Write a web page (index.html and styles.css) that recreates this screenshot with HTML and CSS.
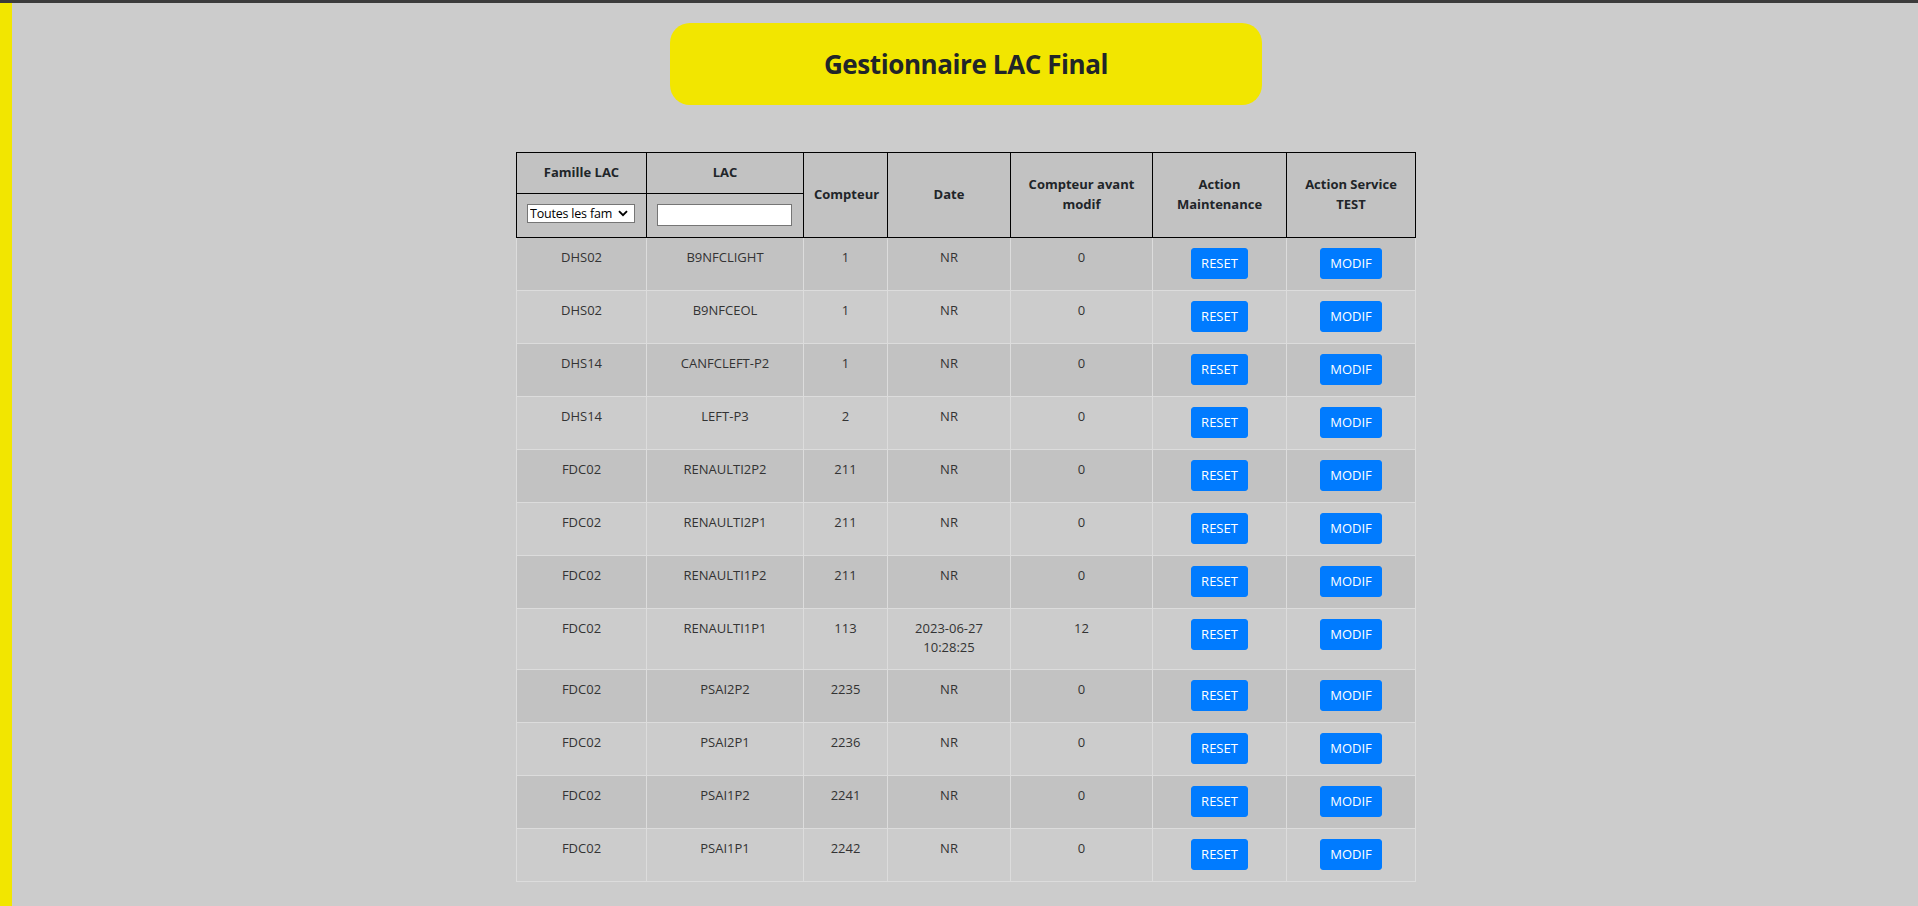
FILE: index.html
```html
<!DOCTYPE html>
<html lang="fr">
<head>
<meta charset="utf-8">
<title>Gestionnaire LAC Final</title>
<link rel="stylesheet" href="styles.css">
</head>
<body>
<div class="page">
  <header class="title-box">
    <h1 class="title">Gestionnaire LAC Final</h1>
  </header>
  <table class="lac-table">
    <colgroup>
      <col class="c-fam"><col class="c-lac"><col class="c-cpt"><col class="c-date"><col class="c-avant"><col class="c-maint"><col class="c-serv">
    </colgroup>
    <thead>
      <tr>
        <th>Famille LAC</th>
        <th>LAC</th>
        <th rowspan="2">Compteur</th>
        <th rowspan="2">Date</th>
        <th rowspan="2">Compteur avant modif</th>
        <th rowspan="2">Action Maintenance</th>
        <th rowspan="2">Action Service TEST</th>
      </tr>
      <tr class="filters">
        <th>
          <span class="select-wrap">
            <select class="filter-select">
              <option>Toutes les familles</option>
              <option>DHS02</option>
              <option>DHS14</option>
              <option>FDC02</option>
            </select>
            <svg class="select-arrow" viewBox="0 0 10 7" width="10" height="7" aria-hidden="true"><path d="M1 1.2 L5 5.2 L9 1.2" fill="none" stroke="#000" stroke-width="1.9"/></svg>
          </span>
        </th>
        <th><input class="filter-input" type="text"></th>
      </tr>
    </thead>
    <tbody>
      <tr><td>DHS02</td><td>B9NFCLIGHT</td><td>1</td><td>NR</td><td>0</td><td><button class="btn">RESET</button></td><td><button class="btn">MODIF</button></td></tr>
      <tr><td>DHS02</td><td>B9NFCEOL</td><td>1</td><td>NR</td><td>0</td><td><button class="btn">RESET</button></td><td><button class="btn">MODIF</button></td></tr>
      <tr><td>DHS14</td><td>CANFCLEFT-P2</td><td>1</td><td>NR</td><td>0</td><td><button class="btn">RESET</button></td><td><button class="btn">MODIF</button></td></tr>
      <tr><td>DHS14</td><td>LEFT-P3</td><td>2</td><td>NR</td><td>0</td><td><button class="btn">RESET</button></td><td><button class="btn">MODIF</button></td></tr>
      <tr><td>FDC02</td><td>RENAULTI2P2</td><td>211</td><td>NR</td><td>0</td><td><button class="btn">RESET</button></td><td><button class="btn">MODIF</button></td></tr>
      <tr><td>FDC02</td><td>RENAULTI2P1</td><td>211</td><td>NR</td><td>0</td><td><button class="btn">RESET</button></td><td><button class="btn">MODIF</button></td></tr>
      <tr><td>FDC02</td><td>RENAULTI1P2</td><td>211</td><td>NR</td><td>0</td><td><button class="btn">RESET</button></td><td><button class="btn">MODIF</button></td></tr>
      <tr><td>FDC02</td><td>RENAULTI1P1</td><td>113</td><td>2023-06-27 10:28:25</td><td>12</td><td><button class="btn">RESET</button></td><td><button class="btn">MODIF</button></td></tr>
      <tr><td>FDC02</td><td>PSAI2P2</td><td>2235</td><td>NR</td><td>0</td><td><button class="btn">RESET</button></td><td><button class="btn">MODIF</button></td></tr>
      <tr><td>FDC02</td><td>PSAI2P1</td><td>2236</td><td>NR</td><td>0</td><td><button class="btn">RESET</button></td><td><button class="btn">MODIF</button></td></tr>
      <tr><td>FDC02</td><td>PSAI1P2</td><td>2241</td><td>NR</td><td>0</td><td><button class="btn">RESET</button></td><td><button class="btn">MODIF</button></td></tr>
      <tr><td>FDC02</td><td>PSAI1P1</td><td>2242</td><td>NR</td><td>0</td><td><button class="btn">RESET</button></td><td><button class="btn">MODIF</button></td></tr>
    </tbody>
  </table>
</div>
</body>
</html>
```
FILE: styles.css
```css
html, body {
  margin: 0;
  padding: 0;
}

body {
  background: #cccccc;
  border-top: 3px solid #3b3b3b;
  font-family: "Open Sans", "Noto Sans", sans-serif;
  color: #212529;
}

.page {
  box-sizing: border-box;
  min-height: calc(100vh - 3px);
  border-left: 12px solid #f2e600;
  display: flex;
  flex-direction: column;
  align-items: center;
  padding: 20px 0 25px 2px;
}

.title-box {
  width: 592px;
  height: 82px;
  background: #f2e600;
  border-radius: 20px;
  display: flex;
  align-items: center;
  justify-content: center;
  margin-bottom: 47px;
}

.title {
  margin: 0;
  font-size: 26px;
  font-weight: 700;
  color: #212529;
  letter-spacing: -0.4px;
}

.lac-table {
  border-collapse: collapse;
  table-layout: fixed;
  width: 899px;
  font-size: 13px;
  line-height: 19.5px;
  text-align: center;
}

.c-fam { width: 130px; }
.c-lac { width: 157px; }
.c-cpt { width: 84px; }
.c-date { width: 123px; }
.c-avant { width: 142px; }
.c-maint { width: 134px; }
.c-serv { width: 129px; }

.lac-table th {
  background: #c2c2c2;
  border: 1px solid #000;
  padding: 10px;
  font-weight: 700;
  color: #212529;
  vertical-align: middle;
}

.lac-table .filters th {
  vertical-align: top;
  padding: 10px 10px 11px;
}

.select-wrap {
  position: relative;
  display: block;
  width: 108px;
}

.filter-select {
  box-sizing: border-box;
  -webkit-appearance: none;
  appearance: none;
  display: block;
  width: 108px;
  height: 19px;
  margin: 0;
  padding: 0 22px 0 2px;
  font-family: "Open Sans", sans-serif;
  font-size: 12.5px;
  line-height: 17px;
  letter-spacing: -0.2px;
  color: #000;
  background: #fff;
  border: 1px solid #767676;
  border-radius: 0;
  text-align: left;
}

.select-arrow {
  position: absolute;
  right: 7px;
  top: 6px;
  pointer-events: none;
}

.filter-input {
  box-sizing: border-box;
  display: block;
  width: 135px;
  height: 22px;
  margin: 0;
  padding: 1px 2px;
  background: #fff;
  border: 1px solid #767676;
  border-radius: 0;
  font-family: "Open Sans", sans-serif;
  font-size: 13px;
}

.lac-table td {
  border: 1px solid #dcdcdc;
  padding: 10px 10px 11px;
  vertical-align: top;
  color: #333;
}

.lac-table tbody tr:nth-child(odd) td {
  background: #c2c2c2;
}

.btn {
  display: inline-block;
  vertical-align: top;
  margin: 0;
  padding: 4px 9px;
  font-family: "Open Sans", sans-serif;
  font-size: 13px;
  line-height: 21px;
  color: #fff;
  background: #007bff;
  border: 1px solid #007bff;
  border-radius: 3px;
  cursor: pointer;
}
```
